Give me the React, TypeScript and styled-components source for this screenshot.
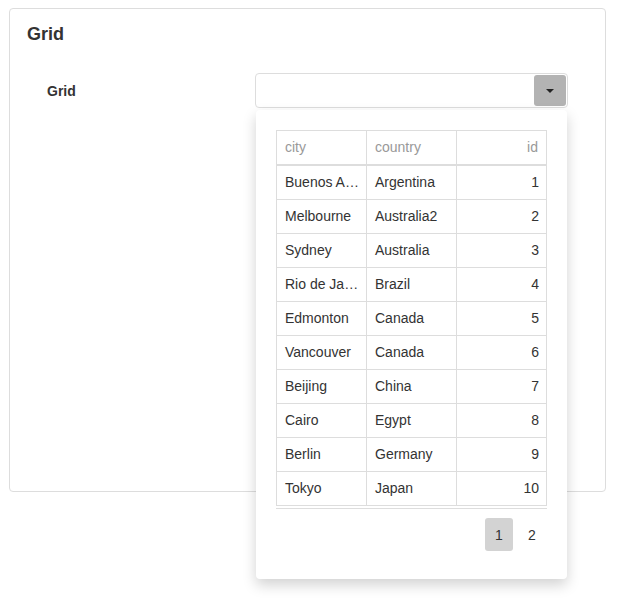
import React, { useState } from 'react';
import styled, { createGlobalStyle } from 'styled-components';

const GlobalStyle = createGlobalStyle`
    html, body, #root {
        min-height: 603px;
    }
    body {
        margin: 0;
        background: #fff;
        font-family: "Liberation Sans", Arial, Helvetica, sans-serif;
        font-size: 14px;
        color: #333;
    }
`

type City = {
    city: string
    country: string
    id: number
}

const cities: Array<City> = [
    { city: 'Buenos Aires', country: 'Argentina', id: 1 },
    { city: 'Melbourne', country: 'Australia2', id: 2 },
    { city: 'Sydney', country: 'Australia', id: 3 },
    { city: 'Rio de Janeiro', country: 'Brazil', id: 4 },
    { city: 'Edmonton', country: 'Canada', id: 5 },
    { city: 'Vancouver', country: 'Canada', id: 6 },
    { city: 'Beijing', country: 'China', id: 7 },
    { city: 'Cairo', country: 'Egypt', id: 8 },
    { city: 'Berlin', country: 'Germany', id: 9 },
    { city: 'Tokyo', country: 'Japan', id: 10 },
]

const App = () => {
    const [page, setPage] = useState(1)

    return (
        <>
            <GlobalStyle />
            <Page>
                <Card>
                    <CardTitle>Grid</CardTitle>
                    <FormRow>
                        <FieldLabel>Grid</FieldLabel>
                        <DropDown>
                            <DropInput />
                            <DropButton type="button" aria-label="open">
                                <Caret />
                            </DropButton>
                            <Popup>
                                <GridBox>
                                    <Table>
                                        <thead>
                                            <tr>
                                                <HeadCell>city</HeadCell>
                                                <HeadCell>country</HeadCell>
                                                <HeadCell right>id</HeadCell>
                                            </tr>
                                        </thead>
                                        <tbody>
                                            {cities.map((c) => (
                                                <tr key={c.id}>
                                                    <Cell>{c.city}</Cell>
                                                    <Cell>{c.country}</Cell>
                                                    <Cell right>{c.id}</Cell>
                                                </tr>
                                            ))}
                                        </tbody>
                                    </Table>
                                </GridBox>
                                <Pager>
                                    {[1, 2].map((p) => (
                                        <PageButton key={p} active={page === p} onClick={() => setPage(p)}>
                                            {p}
                                        </PageButton>
                                    ))}
                                </Pager>
                            </Popup>
                        </DropDown>
                    </FormRow>
                </Card>
            </Page>
        </>
    )
}

const Page = styled.div`
    min-height: 603px;
    padding: 8px 0 0 9px;
    box-sizing: border-box;
`
const Card = styled.div`
    width: 597px;
    height: 484px;
    box-sizing: border-box;
    border: 1px solid #ddd;
    border-radius: 4px;
    padding: 15px 17px;
`
const CardTitle = styled.div`
    font-size: 18px;
    line-height: 20px;
    font-weight: bold;
    color: #333;
`
const FormRow = styled.div`
    display: flex;
    align-items: center;
    margin-top: 29px;
    padding-left: 20px;
`
const FieldLabel = styled.div`
    width: 208px;
    font-weight: bold;
    font-size: 14px;
    color: #333;
`
const DropDown = styled.div`
    position: relative;
    display: flex;
    justify-content: flex-end;
    width: 313px;
    height: 35px;
    box-sizing: border-box;
    border: 1px solid #ddd;
    border-radius: 4px;
    padding: 1px;
`
const DropInput = styled.div`
    flex: 1;
`
const DropButton = styled.button`
    width: 32px;
    height: 31px;
    border: none;
    border-radius: 3px;
    background: #b3b3b3;
    display: flex;
    align-items: center;
    justify-content: center;
    padding: 0;
`
const Caret = styled.span`
    width: 0;
    height: 0;
    border-left: 4px solid transparent;
    border-right: 4px solid transparent;
    border-top: 4px solid #222;
    margin-top: 1px;
`
const Popup = styled.div`
    position: absolute;
    top: 36px;
    left: 0;
    width: 311px;
    box-sizing: border-box;
    background: #fff;
    border-radius: 4px;
    box-shadow: 0 6px 14px rgba(0, 0, 0, 0.18);
    padding: 20px 20px 28px;
    z-index: 2;
`
const GridBox = styled.div`
    border-bottom: 1px solid #ddd;
    padding-bottom: 2px;
`
const Table = styled.table`
    width: 271px;
    table-layout: fixed;
    border-collapse: separate;
    border-spacing: 0;
    border-top: 1px solid #ddd;
    border-left: 1px solid #ddd;
`
const HeadCell = styled.th<{ right?: boolean }>`
    padding: 6px 8px 7px;
    line-height: 20px;
    font-weight: normal;
    color: #999;
    text-align: ${(p) => (p.right ? 'right' : 'left')};
    border-right: 1px solid #ddd;
    border-bottom: 2px solid #ddd;
`
const Cell = styled.td<{ right?: boolean }>`
    padding: ${(p) => (p.right ? '6px 7px 7px 8px' : '6px 6px 7px 8px')};
    line-height: 20px;
    color: #333;
    text-align: ${(p) => (p.right ? 'right' : 'left')};
    border-right: 1px solid #ddd;
    border-bottom: 1px solid #ddd;
    white-space: nowrap;
    overflow: hidden;
    text-overflow: ellipsis;
`
const Pager = styled.div`
    display: flex;
    justify-content: flex-end;
    gap: 5px;
    margin-top: 9px;
    padding-right: 1px;
`
const PageButton = styled.button<{ active?: boolean }>`
    width: 28px;
    height: 33px;
    border: none;
    border-radius: 3px;
    padding: 0;
    background: ${(p) => (p.active ? '#d3d3d3' : 'transparent')};
    font-family: inherit;
    font-size: 14px;
    color: #333;
    cursor: pointer;
`

export default App
